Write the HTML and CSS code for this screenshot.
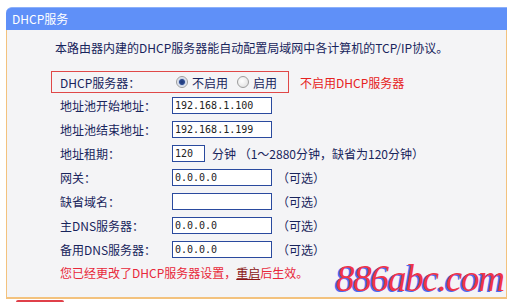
FILE: index.html
```html
<!DOCTYPE html>
<html lang="zh-CN">
<head>
    <meta charset="UTF-8">
    <title>DHCP服务</title>
    <link rel="stylesheet" href="styles.css">
</head>
<body>
    <div class="panel">
        <div class="panel-head">DHCP服务</div>
        <div class="panel-body">
            <p class="intro">本路由器内建的DHCP服务器能自动配置局域网中各计算机的TCP/IP协议。</p>
            <div class="switch-row">
                <div class="switch-box">
                    <span class="label">DHCP服务器：</span>
                    <span class="radio checked"></span><span class="opt">不启用</span>
                    <span class="radio second"></span><span class="opt">启用</span>
                </div>
                <span class="warn">不启用DHCP服务器</span>
            </div>
            <div class="row">
                <span class="label">地址池开始地址：</span>
                <input class="field" type="text" value="192.168.1.100">
            </div>
            <div class="row">
                <span class="label">地址池结束地址：</span>
                <input class="field" type="text" value="192.168.1.199">
            </div>
            <div class="row">
                <span class="label">地址租期：</span>
                <input class="field short" type="text" value="120">
                <span class="unit">分钟 （1～2880分钟，缺省为120分钟）</span>
            </div>
            <div class="row">
                <span class="label">网关：</span>
                <input class="field" type="text" value="0.0.0.0">
                <span class="hint">（可选）</span>
            </div>
            <div class="row">
                <span class="label">缺省域名：</span>
                <input class="field" type="text" value="">
                <span class="hint">（可选）</span>
            </div>
            <div class="row">
                <span class="label">主DNS服务器：</span>
                <input class="field" type="text" value="0.0.0.0">
                <span class="hint">（可选）</span>
            </div>
            <div class="row">
                <span class="label">备用DNS服务器：</span>
                <input class="field" type="text" value="0.0.0.0">
                <span class="hint">（可选）</span>
            </div>
            <p class="notice">您已经更改了DHCP服务器设置，<a href="#">重启</a>后生效。</p>
        </div>
    </div>
    <div class="btn-edge"></div>
    <div class="watermark">886abc.com</div>
</body>
</html>
```

FILE: styles.css
```css
body {
    margin: 0;
    background: #ffffff;
    font-family: "Noto Sans CJK SC", sans-serif;
    font-size: 12px;
    color: #18245c;
    overflow: hidden;
}
.panel {
    width: 501px;
    margin: 7px 0 0 6px;
}
.panel-head {
    height: 23px;
    box-sizing: border-box;
    padding-left: 6px;
    line-height: 22px;
    color: #ffffff;
    background: #5f90f8;
    border-top: 1px solid #8cb0fa;
    border-top-left-radius: 6px;
}
.panel-body {
    height: 269px;
    box-sizing: border-box;
    padding: 6px 0 0 44px;
    background: #f4f4f6;
    border: 1px solid #f3c27e;
    border-top: none;
    border-bottom-width: 2px;
}
.intro {
    margin: 0;
    padding-left: 4px;
    line-height: 24px;
}
.switch-row {
    display: flex;
    align-items: center;
    margin-top: 11px;
}
.switch-box {
    display: flex;
    align-items: center;
    width: 238px;
    height: 22px;
    box-sizing: border-box;
    padding-left: 8px;
    border: 1px solid #e04848;
}
.label {
    width: 112px;
    flex-shrink: 0;
}
.radio {
    width: 12px;
    height: 12px;
    box-sizing: border-box;
    margin: 0 4px;
    border: 1px solid #9c9c9c;
    border-radius: 50%;
    background: radial-gradient(circle at 40% 40%, #ffffff 0, #e6e6e6 70%, #cfcfcf 100%);
}
.radio.checked {
    background: radial-gradient(circle, #1d3778 0, #2c4a90 2.5px, #c9d3e6 3.5px, #ffffff 6px);
}
.radio.second {
    margin-left: 9px;
}
.warn {
    margin-left: 11px;
    color: #e62222;
}
.row {
    display: flex;
    align-items: center;
    height: 24px;
    padding-left: 9px;
}
.field {
    width: 100px;
    height: 17px;
    box-sizing: border-box;
    margin: 0;
    padding: 0 2px;
    border: 1px solid #2a4a9e;
    background: #ffffff;
    font-family: "DejaVu Sans Mono", monospace;
    font-size: 10px;
    color: #222222;
}
.field.short {
    width: 33px;
}
.unit {
    margin-left: 7px;
}
.hint {
    margin-left: 5px;
}
.notice {
    margin: 0;
    padding-left: 9px;
    line-height: 24px;
    color: #e8283a;
}
.notice a {
    color: #8a1414;
    text-decoration: underline;
}
.btn-edge {
    width: 48px;
    height: 4px;
    margin: 1px 0 0 16px;
    background: #e0404a;
    border-radius: 2px 2px 0 0;
}
.watermark {
    position: absolute;
    left: 336px;
    top: 257px;
    font-family: "Liberation Serif", serif;
    font-style: italic;
    font-size: 37px;
    letter-spacing: -1.2px;
    color: #f0344a;
    text-shadow: -2px 1px 0 #4d6af2;
}
```
